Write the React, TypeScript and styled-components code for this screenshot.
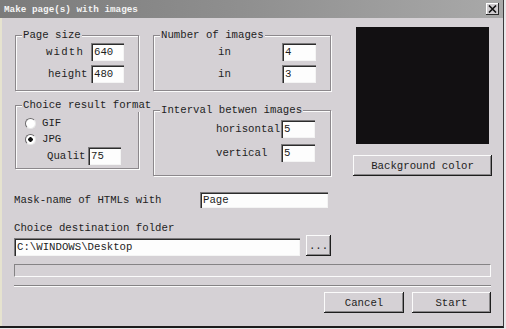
import React from 'react';
import styled, { createGlobalStyle } from 'styled-components';

const GlobalStyle = createGlobalStyle`
  html, body {
    margin: 0;
    padding: 0;
    background: #e9e7e9;
  }
  body {
    font-family: "Liberation Mono", "DejaVu Sans Mono", monospace;
    font-size: 10.7px;
    color: #1e1e1e;
  }
`;

const App: React.FC = () => {
  return (
    <>
      <GlobalStyle />
      <Window>
        <TitleBar>
          <Title>Make page(s) with images</Title>
          <CloseButton>
            <svg width="9" height="8" viewBox="0 0 9 8">
              <path d="M1 0.5 L8 7.5 M8 0.5 L1 7.5" stroke="#111" strokeWidth="1.6" />
            </svg>
          </CloseButton>
        </TitleBar>
        <Body>
          <TopArea>
            <LeftCol>
              <Group $top={8} $height={56} $padTop={7} $gap={4}>
                <Legend>Page size</Legend>
                <Row $indent={30}>
                  <Label $width={45} $spacing={1.2}>width</Label>
                  <Field $width={33}>640</Field>
                </Row>
                <Row $indent={32}>
                  <Label $width={43} $spacing={0.2}>height</Label>
                  <Field $width={33}>480</Field>
                </Row>
              </Group>
              <Group $top={14} $height={64} $padTop={9} $gap={0}>
                <Legend>Choice result format</Legend>
                <RadioRow>
                  <Radio />
                  GIF
                </RadioRow>
                <RadioRow>
                  <Radio $checked />
                  JPG
                </RadioRow>
                <Row $indent={31}>
                  <Label $width={41}>Qualit</Label>
                  <Field $width={33}>75</Field>
                </Row>
              </Group>
            </LeftCol>
            <MiddleCol>
              <Group $top={8} $height={56} $padTop={7} $gap={4}>
                <Legend>Number of images</Legend>
                <Row $indent={64}>
                  <Label $width={64}>in</Label>
                  <Field $width={34}>4</Field>
                </Row>
                <Row $indent={64}>
                  <Label $width={64}>in</Label>
                  <Field $width={34}>3</Field>
                </Row>
              </Group>
              <Group $top={19} $height={66} $padTop={9} $gap={6}>
                <Legend>Interval betwen images</Legend>
                <Row $indent={62}>
                  <Label $width={65}>horisontal</Label>
                  <Field $width={34}>5</Field>
                </Row>
                <Row $indent={62}>
                  <Label $width={65}>vertical</Label>
                  <Field $width={34}>5</Field>
                </Row>
              </Group>
            </MiddleCol>
            <RightCol>
              <Preview />
              <Button $width={139} $top={11}>Background color</Button>
            </RightCol>
          </TopArea>
          <MaskRow>
            <Label $width={186}>Mask-name of HTMLs with</Label>
            <Field $width={128} $height={16}>Page</Field>
          </MaskRow>
          <Caption>Choice destination folder</Caption>
          <FolderRow>
            <Field $width={286} $height={18}>C:\WINDOWS\Desktop</Field>
            <Button $width={25} $top={0} $small>...</Button>
          </FolderRow>
          <Progress />
          <Separator />
          <ButtonRow>
            <Button $width={80} $top={0}>Cancel</Button>
            <Button $width={79} $top={0}>Start</Button>
          </ButtonRow>
        </Body>
      </Window>
    </>
  );
};

const Window = styled.div`
  width: 504px;
  height: 328px;
  box-sizing: border-box;
  display: flex;
  flex-direction: column;
  background: #d5d1d5;
  border-right: 1px solid #3c3a3c;
  border-bottom: 2px solid #1c1c1c;
`;

const TitleBar = styled.div`
  height: 18px;
  flex-shrink: 0;
  display: flex;
  align-items: center;
  justify-content: space-between;
  padding: 0 4px 0 4px;
  background: linear-gradient(90deg, #7b7b7b 0%, #909090 50%, #a9a9a9 100%);
`;

const Title = styled.div`
  font-size: 9.3px;
  font-weight: bold;
  color: #f4f4f4;
`;

const CloseButton = styled.div`
  width: 13px;
  height: 12px;
  box-sizing: border-box;
  display: flex;
  align-items: center;
  justify-content: center;
  background: #d0cdd0;
  box-shadow: inset -1px -1px #2a2a2a, inset 1px 1px #fff;
`;

const Body = styled.div`
  flex: 1;
  display: flex;
  flex-direction: column;
  padding: 9px 0 0 12px;
  border-left: 2px solid #e6e3cf;
`;

const TopArea = styled.div`
  display: flex;
  align-items: flex-start;
`;

const LeftCol = styled.div`
  display: flex;
  flex-direction: column;
  width: 124px;
  margin-left: 1px;
`;

const MiddleCol = styled.div`
  display: flex;
  flex-direction: column;
  width: 178px;
  margin-left: 14px;
`;

const RightCol = styled.div`
  display: flex;
  flex-direction: column;
  width: 139px;
  margin-left: 22px;
`;

const Group = styled.div<{ $top: number; $height: number; $padTop: number; $gap: number }>`
  position: relative;
  box-sizing: border-box;
  margin-top: ${(p) => p.$top}px;
  height: ${(p) => p.$height}px;
  padding-top: ${(p) => p.$padTop}px;
  display: flex;
  flex-direction: column;
  gap: ${(p) => p.$gap}px;
  border: 1px solid #8c888c;
  box-shadow: 1px 1px 0 #fbfbfb, inset 1px 1px 0 #fbfbfb;
`;

const Legend = styled.span`
  position: absolute;
  top: -7px;
  left: 6px;
  padding: 0 1px;
  line-height: 13px;
  white-space: nowrap;
  background: #d5d1d5;
`;

const Row = styled.div<{ $indent: number }>`
  display: flex;
  align-items: center;
  padding-left: ${(p) => p.$indent}px;
`;

const Label = styled.div<{ $width: number; $spacing?: number }>`
  width: ${(p) => p.$width}px;
  flex-shrink: 0;
  white-space: nowrap;
  letter-spacing: ${(p) => p.$spacing ?? 0}px;
`;

const Field = styled.div<{ $width: number; $height?: number }>`
  width: ${(p) => p.$width}px;
  height: ${(p) => p.$height ?? 18}px;
  box-sizing: border-box;
  padding-left: 3px;
  display: flex;
  align-items: center;
  background: #fdfdfd;
  white-space: nowrap;
  overflow: hidden;
  box-shadow: inset 1px 1px #7c7a7c, inset 2px 2px #2c2c2c, inset -1px -1px #f4f4f4;
`;

const RadioRow = styled.div`
  height: 16px;
  display: flex;
  align-items: center;
  gap: 6px;
  padding-left: 9px;
`;

const Radio = styled.span<{ $checked?: boolean }>`
  width: 11px;
  height: 11px;
  box-sizing: border-box;
  border-radius: 50%;
  background: ${(p) =>
    p.$checked ? 'radial-gradient(circle, #111 0 2px, #fff 2.5px)' : '#fff'};
  border: 1px solid #6c6a6c;
  border-right-color: #e8e8e8;
  border-bottom-color: #e8e8e8;
`;

const Preview = styled.div`
  margin: 0 3px;
  height: 117px;
  background: #121012;
`;

const Button = styled.div<{ $width: number; $top: number; $small?: boolean }>`
  width: ${(p) => p.$width}px;
  height: 21px;
  margin-top: ${(p) => p.$top}px;
  box-sizing: border-box;
  flex-shrink: 0;
  display: flex;
  align-items: ${(p) => (p.$small ? 'flex-end' : 'center')};
  justify-content: center;
  padding-bottom: ${(p) => (p.$small ? 4 : 0)}px;
  background: #d5d1d5;
  box-shadow: inset -1px -1px #1e1e1e, inset 1px 1px #fbfbfb, inset -2px -2px #8a888a;
`;

const MaskRow = styled.div`
  display: flex;
  align-items: center;
  margin-top: 16px;
`;

const Caption = styled.div`
  margin-top: 14px;
  line-height: 13px;
`;

const FolderRow = styled.div`
  display: flex;
  align-items: flex-end;
  gap: 6px;
`;

const Progress = styled.div`
  width: 477px;
  height: 13px;
  margin-top: 8px;
  box-sizing: border-box;
  border-top: 1px solid #858385;
  border-left: 1px solid #858385;
  border-bottom: 1px solid #fbfbfb;
  border-right: 1px solid #fbfbfb;
`;

const Separator = styled.div`
  width: 477px;
  margin-top: 8px;
  border-top: 1px solid #858385;
  border-bottom: 1px solid #fbfbfb;
`;

const ButtonRow = styled.div`
  width: 477px;
  margin-top: 5px;
  display: flex;
  justify-content: flex-end;
  gap: 8px;
`;

export default App;
